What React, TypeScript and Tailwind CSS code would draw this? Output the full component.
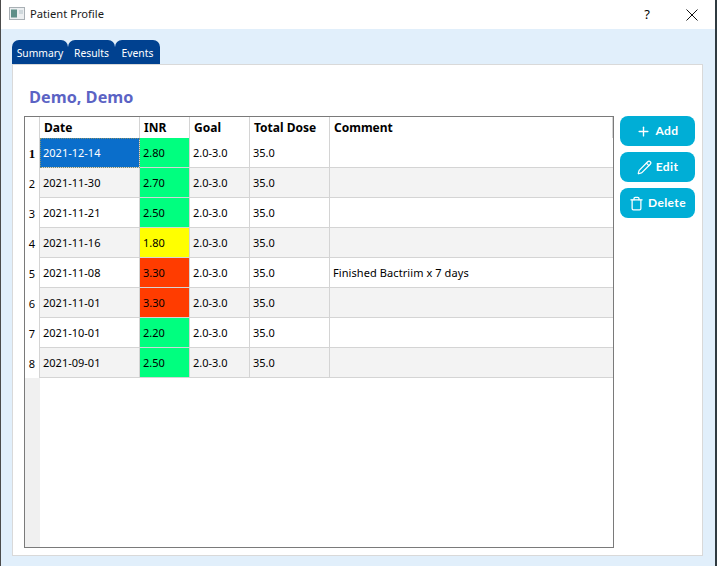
import { Pencil, Plus, Trash } from 'lucide-react'

const rows = [
  { date: '2021-12-14', inr: '2.80', color: 'bg-[#00ff7f]', comment: '' },
  { date: '2021-11-30', inr: '2.70', color: 'bg-[#00ff7f]', comment: '' },
  { date: '2021-11-21', inr: '2.50', color: 'bg-[#00ff7f]', comment: '' },
  { date: '2021-11-16', inr: '1.80', color: 'bg-[#ffff00]', comment: '' },
  { date: '2021-11-08', inr: '3.30', color: 'bg-[#ff3c00]', comment: 'Finished Bactriim x 7 days' },
  { date: '2021-11-01', inr: '3.30', color: 'bg-[#ff3c00]', comment: '' },
  { date: '2021-10-01', inr: '2.20', color: 'bg-[#00ff7f]', comment: '' },
  { date: '2021-09-01', inr: '2.50', color: 'bg-[#00ff7f]', comment: '' },
]

const headers = [
  { label: 'Date', width: 'w-[100px]' },
  { label: 'INR', width: 'w-[50px]' },
  { label: 'Goal', width: 'w-[60px]' },
  { label: 'Total Dose', width: 'w-[80px]' },
  { label: 'Comment', width: 'flex-1' },
]

const buttons = [
  { label: 'Add', icon: <Plus size={15} strokeWidth={2.2} /> },
  { label: 'Edit', icon: <Pencil size={15} strokeWidth={2} /> },
  { label: 'Delete', icon: <Trash size={15} strokeWidth={2} /> },
]

function WindowIcon() {
  return (
    <svg width="16" height="14" viewBox="0 0 16 14" className="-mt-[2px]">
      <rect x="0.5" y="0.5" width="15" height="12" fill="#eceff1" stroke="#a9b0b5" />
      <rect x="2" y="2.5" width="6" height="8" fill="#5f8f88" />
      <rect x="10" y="3" width="4" height="4" fill="#cfd8dc" />
    </svg>
  )
}

export default function App() {
  return (
    <div className="w-[717px] h-[566px] flex flex-col overflow-hidden bg-[#e1effb] border-l border-r-2 border-l-[#4b4b4b] border-r-[#2f3a40] font-['Noto_Sans',sans-serif] text-black">
      {/* title bar */}
      <div className="h-[29px] bg-white flex items-center pl-[8px] shrink-0">
        <WindowIcon />
        <span className="ml-[5px] text-[11.2px] text-[#1a1a1a]">Patient Profile</span>
        <span className="ml-auto text-[13px] mr-[36px]">?</span>
        <svg width="12" height="12" viewBox="0 0 12 12" className="mr-[17px]">
          <path d="M0.5 0.5 L11.5 11.5 M11.5 0.5 L0.5 11.5" stroke="#111" strokeWidth="1" />
        </svg>
      </div>

      <div className="flex-1 flex flex-col pt-[11px] pl-[11px] pr-[12px] pb-[10px]">
        {/* tabs */}
        <div className="flex h-[24px] shrink-0 text-[10.3px] text-white">
          <div className="w-[56px] bg-[#004190] rounded-t-[7px] flex items-center justify-center pt-[3px]">Summary</div>
          <div className="w-[47px] bg-[#004190] rounded-t-[7px] flex items-center justify-center pt-[3px]">Results</div>
          <div className="w-[45px] bg-[#004190] rounded-t-[7px] flex items-center justify-center pt-[3px]">Events</div>
        </div>

        {/* panel */}
        <div className="flex-1 bg-white border border-[#d9d9d9] pl-[11px] pr-[7px] pt-[20px] pb-[7px] flex flex-col">
          <h1 className="h-[31px] pl-[5px] text-[16.3px] leading-[24px] font-bold text-[#5b63c4] font-['Open_Sans',sans-serif]">Demo, Demo</h1>

          <div className="flex-1 flex gap-[6px]">
            {/* table */}
            <div className="w-[590px] border border-[#7a7a7a] flex flex-col bg-white">
              <div className="flex h-[21px] shrink-0">
                <div className="w-[15px] shrink-0 bg-white border-r border-[#d4d4d4]" />
                {headers.map((h) => (
                  <div key={h.label} className={`${h.width} shrink-0 pl-1 pt-[1px] border-r border-[#d4d4d4] text-[12px] font-bold leading-[20px]`}>
                    {h.label}
                  </div>
                ))}
              </div>
              {rows.map((r, i) => (
                <div key={r.date} className={`flex shrink-0 text-[11px] h-[30px] ${i % 2 === 1 ? 'bg-[#f3f3f3]' : 'bg-white'}`}>
                  <div className={`w-[15px] shrink-0 bg-white border-r border-[#d4d4d4] flex items-center justify-center pt-[2px] ${i === 0 ? "font-bold text-[13px] font-['Liberation_Serif',serif]" : 'text-[11px]'}`}>
                    {i + 1}
                  </div>
                  <div className={`w-[100px] shrink-0 pl-[3px] pt-[2px] flex items-center border-r border-b border-[#d4d4d4] ${i === 0 ? 'bg-[#0a6ecb] text-white outline-1 outline-dotted -outline-offset-1 outline-[#7f8f70]' : ''}`}>
                    {r.date}
                  </div>
                  <div className={`w-[50px] shrink-0 pl-[3px] pt-[2px] flex items-center border-r border-b border-[#d4d4d4] ${r.color}`}>{r.inr}</div>
                  <div className="w-[60px] shrink-0 pl-[3px] pt-[2px] flex items-center border-r border-b border-[#d4d4d4]">2.0-3.0</div>
                  <div className="w-[80px] shrink-0 pl-[3px] pt-[2px] flex items-center border-r border-b border-[#d4d4d4]">35.0</div>
                  <div className="flex-1 pl-[3px] pt-[2px] flex items-center border-b border-[#d4d4d4] tracking-[0.08px]">{r.comment}</div>
                </div>
              ))}
              <div className="flex-1 flex">
                <div className="w-[15px] bg-[#f0f0f0]" />
              </div>
            </div>

            {/* buttons */}
            <div className="flex flex-col gap-[6px] w-[75px]">
              {buttons.map((b) => (
                <button key={b.label} className="h-[30px] rounded-[8px] bg-[#00aed6] text-white flex items-center justify-center gap-[4px] text-[12px] font-bold font-['Lato',sans-serif] tracking-[0.4px]">
                  {b.icon}
                  {b.label}
                </button>
              ))}
            </div>
          </div>
        </div>
      </div>
    </div>
  )
}
